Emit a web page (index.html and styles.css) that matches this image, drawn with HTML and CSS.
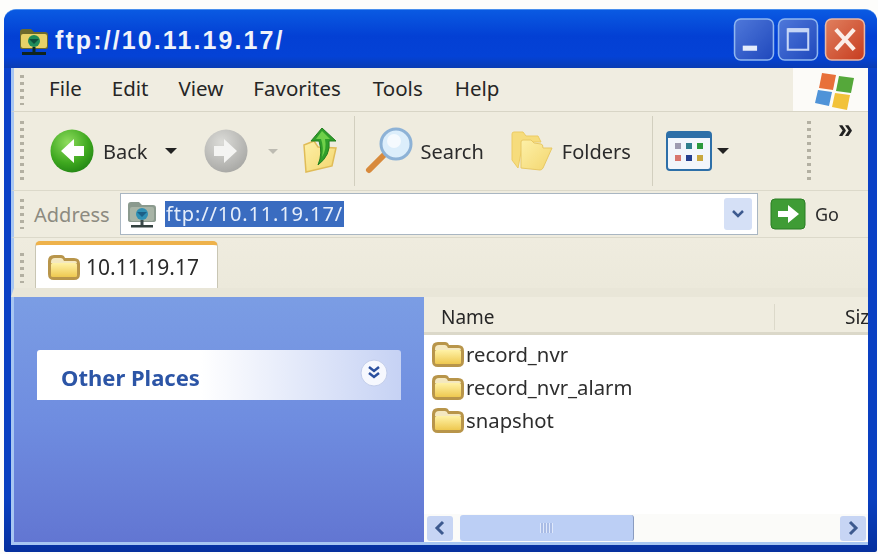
FILE: index.html
```html
<!DOCTYPE html>
<html lang="en">
<head>
<meta charset="utf-8">
<title>ftp://10.11.19.17/</title>
<link rel="stylesheet" href="styles.css">
</head>
<body>
<svg class="defs" width="0" height="0" aria-hidden="true">
  <defs>
    <linearGradient id="fold" x1="0" y1="0" x2="0" y2="1"><stop offset="0" stop-color="#fff2a6"/><stop offset="1" stop-color="#eec850"/></linearGradient>
    <linearGradient id="paleFold" x1="0" y1="0" x2="1" y2="1"><stop offset="0" stop-color="#fdf0a8"/><stop offset="1" stop-color="#f3d66e"/></linearGradient>
    <radialGradient id="grn" cx=".4" cy=".3" r=".8"><stop offset="0" stop-color="#8fdc5e"/><stop offset=".6" stop-color="#3ea81f"/><stop offset="1" stop-color="#1c7d12"/></radialGradient>
    <radialGradient id="gry" cx=".4" cy=".3" r=".8"><stop offset="0" stop-color="#dcdcd8"/><stop offset="1" stop-color="#a3a3a0"/></radialGradient>
    <linearGradient id="blueBtn" x1="0" y1="0" x2="1" y2="1"><stop offset="0" stop-color="#4f78da"/><stop offset="1" stop-color="#1f48bc"/></linearGradient>
    <linearGradient id="redBtn" x1="0" y1="0" x2="1" y2="1"><stop offset="0" stop-color="#e0805f"/><stop offset="1" stop-color="#c73c1f"/></linearGradient>
    <symbol id="folder" viewBox="0 0 32 26">
      <path d="M0 7q0-6 6-6h7q3 0 4 3h9q6 0 6 6v10q0 6-6 6H6q-6 0-6-6z" fill="#b8954a"/>
      <path d="M3 8q0-4 4-4h6q2 0 3 3h11q2 0 2 2H3z" fill="#f4e8c0"/>
      <rect x="3" y="9" width="26" height="14" rx="1.500" fill="url(#fold)"/>
    </symbol>
    <symbol id="ftp" viewBox="0 0 32 32">
      <path d="M2 7q0-3 3-3h8l3 3h11q3 0 3 3v12q0 2-3 2H5q-3 0-3-2z" fill="#8b9a8e"/>
      <rect x="4" y="9" width="24" height="14" rx="2" fill="#a8b4a6"/>
      <circle cx="16" cy="16" r="6" fill="#2f8fb4"/>
      <path d="M11 14h10l-5 5z" fill="#1c5f86"/>
      <rect x="14.500" y="22" width="3" height="5" fill="#3a4a4a"/>
      <rect x="5" y="27" width="22" height="2.500" fill="#33413f"/>
    </symbol>
    <symbol id="ftpTitle" viewBox="0 0 32 32">
      <path d="M2 7q0-3 3-3h8l3 3h11q3 0 3 3v12q0 2-3 2H5q-3 0-3-2z" fill="#6c6a2c"/>
      <rect x="3" y="9" width="26" height="14" rx="2" fill="#e8d267"/>
      <circle cx="16" cy="16" r="6" fill="#1f8c5a"/>
      <path d="M11 14h10l-5 5z" fill="#0e4f3c"/>
      <rect x="14.500" y="22" width="3" height="5" fill="#0c2a22"/>
      <rect x="4" y="27" width="24" height="3" fill="#10241e"/>
    </symbol>
  </defs>
</svg>

<main class="window">
  <header class="titlebar">
    <svg class="title-icon"><use href="#ftpTitle"/></svg>
    <h1 class="title">ftp://10.11.19.17/</h1>
    <div class="caption">
      <svg class="cap" viewBox="0 0 40 42"><rect x="1" y="1" width="38" height="40" rx="6" fill="url(#blueBtn)" stroke="#8fb6f0" stroke-width="1.500"/><rect x="9" y="27" width="14" height="5" fill="#e4ecfb"/></svg>
      <svg class="cap" viewBox="0 0 40 42"><rect x="1" y="1" width="38" height="40" rx="6" fill="url(#blueBtn)" stroke="#8fb6f0" stroke-width="1.500"/><rect x="10" y="11" width="20" height="20" fill="none" stroke="#c6d6f6" stroke-width="2"/><rect x="10" y="10" width="20" height="4" fill="#c6d6f6"/></svg>
      <svg class="cap" viewBox="0 0 40 42"><rect x="1" y="1" width="38" height="40" rx="6" fill="url(#redBtn)" stroke="#e8b8a6" stroke-width="1.500"/><path d="M11 11l18 20M29 11L11 31" stroke="#fbeee8" stroke-width="4"/></svg>
    </div>
  </header>

  <nav class="menubar">
    <span class="grip grip-menu"></span>
    <ul class="menus">
      <li>File</li><li>Edit</li><li>View</li><li>Favorites</li><li>Tools</li><li>Help</li>
    </ul>
    <div class="logo">
      <svg class="flag" viewBox="0 0 40 40">
        <path d="M8 3L22 5 19 20 5 18z" fill="#e8703a"/>
        <path d="M25 6L40 8 37 23 22 21z" fill="#55a83a"/>
        <path d="M4 20L18 22 15 36 1 33z" fill="#4f93d8"/>
        <path d="M21 23L36 25 33 40 18 37z" fill="#f2c23a"/>
      </svg>
    </div>
  </nav>

  <section class="toolbar">
    <span class="grip grip-tool"></span>
    <svg class="nav-icon back" viewBox="0 0 44 44"><circle cx="22" cy="22" r="21.500" fill="url(#grn)"/><path d="M24 10L11 22l13 12v-7h10V17H24z" fill="#fff"/></svg>
    <span class="tool-label label-back">Back</span>
    <span class="drop drop-back"></span>
    <svg class="nav-icon fwd" viewBox="0 0 44 44"><circle cx="22" cy="22" r="21.500" fill="url(#gry)"/><path d="M20 10l13 12-13 12v-7H10V17h10z" fill="#f4f4f2"/></svg>
    <span class="drop drop-fwd"></span>
    <svg class="up" viewBox="0 0 40 46">
      <path d="M4 17l10-4 4 6 18 1-4 18-26 6z" fill="url(#paleFold)" stroke="#e0bc58" stroke-width="1.500"/>
      <path d="M22 0L36 13h-7q2 14-11 24q5-12 1-24h-8z" fill="#2f9e2a" stroke="#237f20"/>
      <path d="M22 3l8 8h-5q2 10-3 18q2-10-1-18h-5z" fill="#6fd04a"/>
    </svg>
    <span class="sep sep-a"></span>
    <svg class="search" viewBox="0 0 48 48">
      <path d="M19 28L4 43" stroke="#d88a3c" stroke-width="6" stroke-linecap="round"/>
      <circle cx="31" cy="17" r="15" fill="#dceefb" stroke="#8db2d6" stroke-width="3"/>
      <circle cx="29" cy="14" r="7" fill="#fff" opacity=".7"/>
    </svg>
    <span class="tool-label label-search">Search</span>
    <svg class="folders" viewBox="0 0 44 42">
      <path d="M3 4q0-2 2-2h9l3 4h12l3 6H14L9 38 3 30z" fill="#f6dc7c" stroke="#eccb62"/>
      <path d="M12 12q0-2 2-2h8l3 3 7 1q2 0 2 4h9L34 38q-1 2-3 2L12 38z" fill="url(#paleFold)" stroke="#e8c864"/>
    </svg>
    <span class="tool-label label-folders">Folders</span>
    <span class="sep sep-b"></span>
    <svg class="views" viewBox="0 0 46 40">
      <rect x="1" y="1" width="44" height="38" rx="3" fill="#f2f6fb" stroke="#2d6fa8" stroke-width="2"/>
      <rect x="1" y="1" width="44" height="6" fill="#2d6fa8"/>
      <g>
        <rect x="9" y="12" width="6" height="6" fill="#9d9bb0"/><rect x="20" y="12" width="6" height="6" fill="#2f7f8c"/><rect x="31" y="12" width="6" height="6" fill="#2b9a3c"/>
        <rect x="9" y="24" width="6" height="6" fill="#d8766e"/><rect x="20" y="24" width="6" height="6" fill="#243f8e"/><rect x="31" y="24" width="6" height="6" fill="#c9a83e"/>
      </g>
    </svg>
    <span class="drop drop-views"></span>
    <span class="grip grip-more"></span>
    <span class="more">»</span>
  </section>

  <section class="addressbar">
    <span class="grip grip-addr"></span>
    <span class="addr-label">Address</span>
    <div class="addr-input">
      <svg class="addr-icon"><use href="#ftp"/></svg>
      <span class="addr-sel">ftp://10.11.19.17/</span>
      <span class="addr-drop"><svg viewBox="0 0 14 10" width="14" height="10"><path d="M2 2l5 5 5-5" fill="none" stroke="#3d5a8f" stroke-width="2.500"/></svg></span>
    </div>
    <svg class="go-icon" viewBox="0 0 36 32"><rect x="1" y="1" width="34" height="30" rx="4" fill="#3f9c35" stroke="#2b7d25"/><path d="M8 13h10V7l11 9-11 9v-6H8z" fill="#fff"/></svg>
    <span class="go-label">Go</span>
  </section>

  <section class="tabbar">
    <span class="grip grip-tab"></span>
    <div class="tab">
      <svg class="tab-icon"><use href="#folder"/></svg>
      <span>10.11.19.17</span>
    </div>
  </section>

  <section class="content">
    <aside class="sidebar">
      <div class="panel">
        <span class="panel-title">Other Places</span>
        <svg class="chev" viewBox="0 0 28 28"><circle cx="14" cy="14" r="13" fill="#f6f8fe" stroke="#c2cdea"/><path d="M9 8l5 4 5-4M9 14l5 4 5-4" fill="none" stroke="#2a4f9e" stroke-width="2.500"/></svg>
      </div>
    </aside>
    <div class="files">
      <div class="col-head">
        <span class="col-name">Name</span>
        <span class="col-size">Siz</span>
      </div>
      <ul class="list">
        <li><svg class="row-icon"><use href="#folder"/></svg><span>record_nvr</span></li>
        <li><svg class="row-icon"><use href="#folder"/></svg><span>record_nvr_alarm</span></li>
        <li><svg class="row-icon"><use href="#folder"/></svg><span>snapshot</span></li>
      </ul>
      <div class="hscroll">
        <span class="sb-btn"><svg viewBox="0 0 12 16" width="12" height="16"><path d="M9 2L3 8l6 6" fill="none" stroke="#3d5a8f" stroke-width="3"/></svg></span>
        <span class="sb-thumb"><i class="thumb-mark"></i></span>
        <span class="sb-btn sb-right"><svg viewBox="0 0 12 16" width="12" height="16"><path d="M3 2l6 6-6 6" fill="none" stroke="#3d5a8f" stroke-width="3"/></svg></span>
      </div>
    </div>
  </section>
</main>
</body>
</html>
```

FILE: styles.css
```css
* { box-sizing: border-box; }
html, body { margin: 0; height: 100%; }
body {
  width: 878px;
  height: 554px;
  padding: 9px 1px 2px 4px;
  background: #fdfdfb;
  overflow: hidden;
  font-family: "Noto Sans", "Liberation Sans", sans-serif;
  color: #222;
}
.defs { position: absolute; }
ul { list-style: none; margin: 0; padding: 0; }

.window {
  height: 543px;
  display: flex;
  flex-direction: column;
  padding: 0 9px 7px 7px;
  background: linear-gradient(#0a56dc, #0a40c8 12%, #0a40c0 90%, #06309e);
  border-radius: 12px 12px 2px 2px;
  border-top: 1px solid #4a90ee;
  filter: blur(.7px);
}

.titlebar {
  height: 58px;
  flex: none;
  display: flex;
  align-items: center;
  margin: 0 -9px 0 -7px;
  padding: 3px 11px 0 14px;
  background: linear-gradient(#0a5ae2, #0340d4 45%, #0442d6 80%, #0a3cb4);
  border-radius: 12px 12px 0 0;
}
.title-icon { width: 32px; height: 32px; flex: none; }
.title {
  margin: 0 0 0 5px;
  font: bold 25px/1 "Liberation Sans", sans-serif;
  letter-spacing: 2.100px;
  color: #f0f3fa;
}
.caption { margin-left: auto; display: flex; gap: 2px; margin-top: -2px; }
.cap { width: 42px; height: 43px; display: block; }
.cap:last-child { margin-left: 3px; }

.menubar {
  height: 44px;
  flex: none;
  display: flex;
  align-items: center;
  background: #f0ede1;
  border-bottom: 1px solid #d8d5c6;
  border-left: 3px solid #a7c6f2;
}
.grip { width: 4px; flex: none; background: repeating-linear-gradient(#b3b0a2 0 3px, transparent 3px 7px); }
.grip-menu { height: 30px; margin-left: 6px; }
.menus { display: flex; font-size: 20.500px; color: #262626; margin: -4px 0 0 25px; gap: 30px; }
.menus li:nth-child(5), .menus li:nth-child(6) { margin-left: 2px; }
.logo {
  margin-left: auto;
  width: 75px;
  height: 100%;
  background: #fcfbf8;
  display: flex;
  align-items: center;
  justify-content: center;
}
.flag { width: 40px; height: 40px; margin-left: 6px; }

.toolbar {
  height: 79px;
  flex: none;
  display: flex;
  align-items: center;
  background: #efecdf;
  border-bottom: 1px solid #dcd9ca;
  border-left: 3px solid #a7c6f2;
  position: relative;
}
.grip-tool { height: 60px; margin-left: 6px; }
.nav-icon { width: 44px; height: 44px; flex: none; }
.back { margin-left: 26px; }
.tool-label { font-size: 20px; color: #2b2b2b; flex: none; }
.label-back { margin-left: 9px; }
.drop { width: 0; height: 0; border: 6px solid transparent; border-top: 6px solid #222; border-bottom: 0; flex: none; }
.drop-back { margin-left: 17px; }
.fwd { margin-left: 27px; }
.drop-fwd { margin-left: 20px; border-top-color: #bdbbb2; border-width: 5px 5px 0; }
.up { width: 40px; height: 46px; margin-left: 22px; flex: none; }
.sep { width: 1px; height: 70px; background: #d2cfbf; flex: none; }
.sep-a { margin-left: 14px; }
.search { width: 48px; height: 48px; margin-left: 10px; flex: none; }
.label-search { margin-left: 8px; }
.folders { width: 44px; height: 42px; margin-left: 25px; flex: none; }
.label-folders { margin-left: 9px; }
.sep-b { margin-left: 21px; }
.views { width: 46px; height: 40px; margin-left: 13px; flex: none; }
.drop-views { margin-left: 5px; }
.grip-more { height: 60px; margin-left: 78px; }
.more {
  font: bold 27px/1 "Liberation Sans", sans-serif;
  margin-left: 27px;
  align-self: flex-start;
  margin-top: 4px;
  color: #222;
}

.addressbar {
  height: 47px;
  flex: none;
  display: flex;
  align-items: center;
  background: #efecdf;
  border-bottom: 1px solid #dcd9ca;
  border-left: 3px solid #a7c6f2;
}
.grip-addr { height: 30px; margin-left: 6px; }
.addr-label { font-size: 20px; color: #8c8a80; margin-left: 10px; width: 86px; flex: none; }
.addr-input {
  width: 638px;
  height: 42px;
  flex: none;
  display: flex;
  align-items: center;
  background: #fff;
  border: 1px solid #a9b6c2;
  padding-left: 5px;
}
.addr-icon { width: 32px; height: 32px; flex: none; }
.addr-sel {
  margin-left: 7px;
  height: 26px;
  padding: 0 1px;
  background: #3a6cc0;
  color: #e6eefa;
  font: 20px/26px "Noto Sans", sans-serif;
  letter-spacing: .85px;
}
.addr-drop {
  margin-left: auto;
  margin-right: 5px;
  width: 28px;
  height: 32px;
  background: #d5e0f6;
  border-radius: 3px;
  display: flex;
  align-items: center;
  justify-content: center;
}
.go-icon { width: 36px; height: 32px; margin-left: 12px; flex: none; }
.go-label { font-size: 18px; margin-left: 9px; color: #2b2b2b; }

.tabbar {
  height: 59px;
  flex: none;
  display: flex;
  align-items: flex-end;
  background: linear-gradient(#efecdf, #ece9db);
  border-left: 3px solid #a7c6f2;
  border-bottom: 9px solid #e9e6d8;
}
.grip-tab { height: 30px; margin: 0 0 5px 6px; }
.tab {
  width: 183px;
  height: 47px;
  margin-left: 11px;
  display: flex;
  align-items: center;
  gap: 6px;
  padding-left: 12px;
  background: #fff;
  border: 1px solid #c9c6b4;
  border-bottom: 0;
  border-top: 4px solid #eeb24b;
  border-radius: 5px 5px 0 0;
  font-size: 21px;
  color: #2b2b2b;
}
.tab-icon { width: 32px; height: 28px; flex: none; }

.content {
  flex: 1;
  min-height: 0;
  display: flex;
  border-left: 3px solid #a7c6f2;
  border-bottom: 3px solid #a7c6f2;
  background: #fff;
}
.sidebar {
  width: 410px;
  flex: none;
  background: linear-gradient(#7b9de4, #6f8de0 50%, #6276d2);
  padding: 53px 23px 0;
}
.panel {
  height: 50px;
  display: flex;
  align-items: center;
  justify-content: space-between;
  padding: 4px 13px 0 24px;
  background: linear-gradient(90deg, #fff 45%, #c6d2f4);
  border-radius: 3px 3px 0 0;
}
.panel-title { font: bold 22px/1 "Noto Sans", sans-serif; color: #2c55a6; }
.chev { width: 28px; height: 28px; margin-top: -8px; }

.files { flex: 1; min-width: 0; display: flex; flex-direction: column; overflow: hidden; }
.col-head {
  height: 38px;
  flex: none;
  display: flex;
  align-items: center;
  padding-top: 5px;
  background: #efecdf;
  border-bottom: 3px solid #dbd8c9;
  font-size: 19px;
  color: #262626;
  white-space: nowrap;
}
.col-name { width: 351px; padding-left: 17px; border-right: 1px solid #dcd9ca; line-height: 26px; flex: none; }
.col-size { margin-left: 70px; }
.list { flex: 1; padding: 2px 0 0 8px; font-size: 20.300px; color: #2e2e2e; }
.list li { height: 33px; display: flex; align-items: center; gap: 2px; }
.row-icon { width: 32px; height: 26px; flex: none; }
.hscroll {
  height: 28px;
  flex: none;
  display: flex;
  align-items: center;
  padding: 0 2px 0 3px;
  background: #fbfbf9;
}
.sb-btn {
  width: 26px;
  height: 25px;
  flex: none;
  background: #c7d5f4;
  border-radius: 3px;
  display: flex;
  align-items: center;
  justify-content: center;
}
.sb-right { margin-left: auto; }
.sb-thumb {
  width: 174px;
  height: 26px;
  margin-left: 7px;
  flex: none;
  background: #bccff5;
  border-right: 1px solid #8a9cc0;
  border-radius: 3px;
  display: flex;
  align-items: center;
  justify-content: center;
}
.thumb-mark { display: block; width: 13px; height: 10px; background: repeating-linear-gradient(90deg, #dfe8fb 0 1px, #a9bce6 1px 3px); }
```
